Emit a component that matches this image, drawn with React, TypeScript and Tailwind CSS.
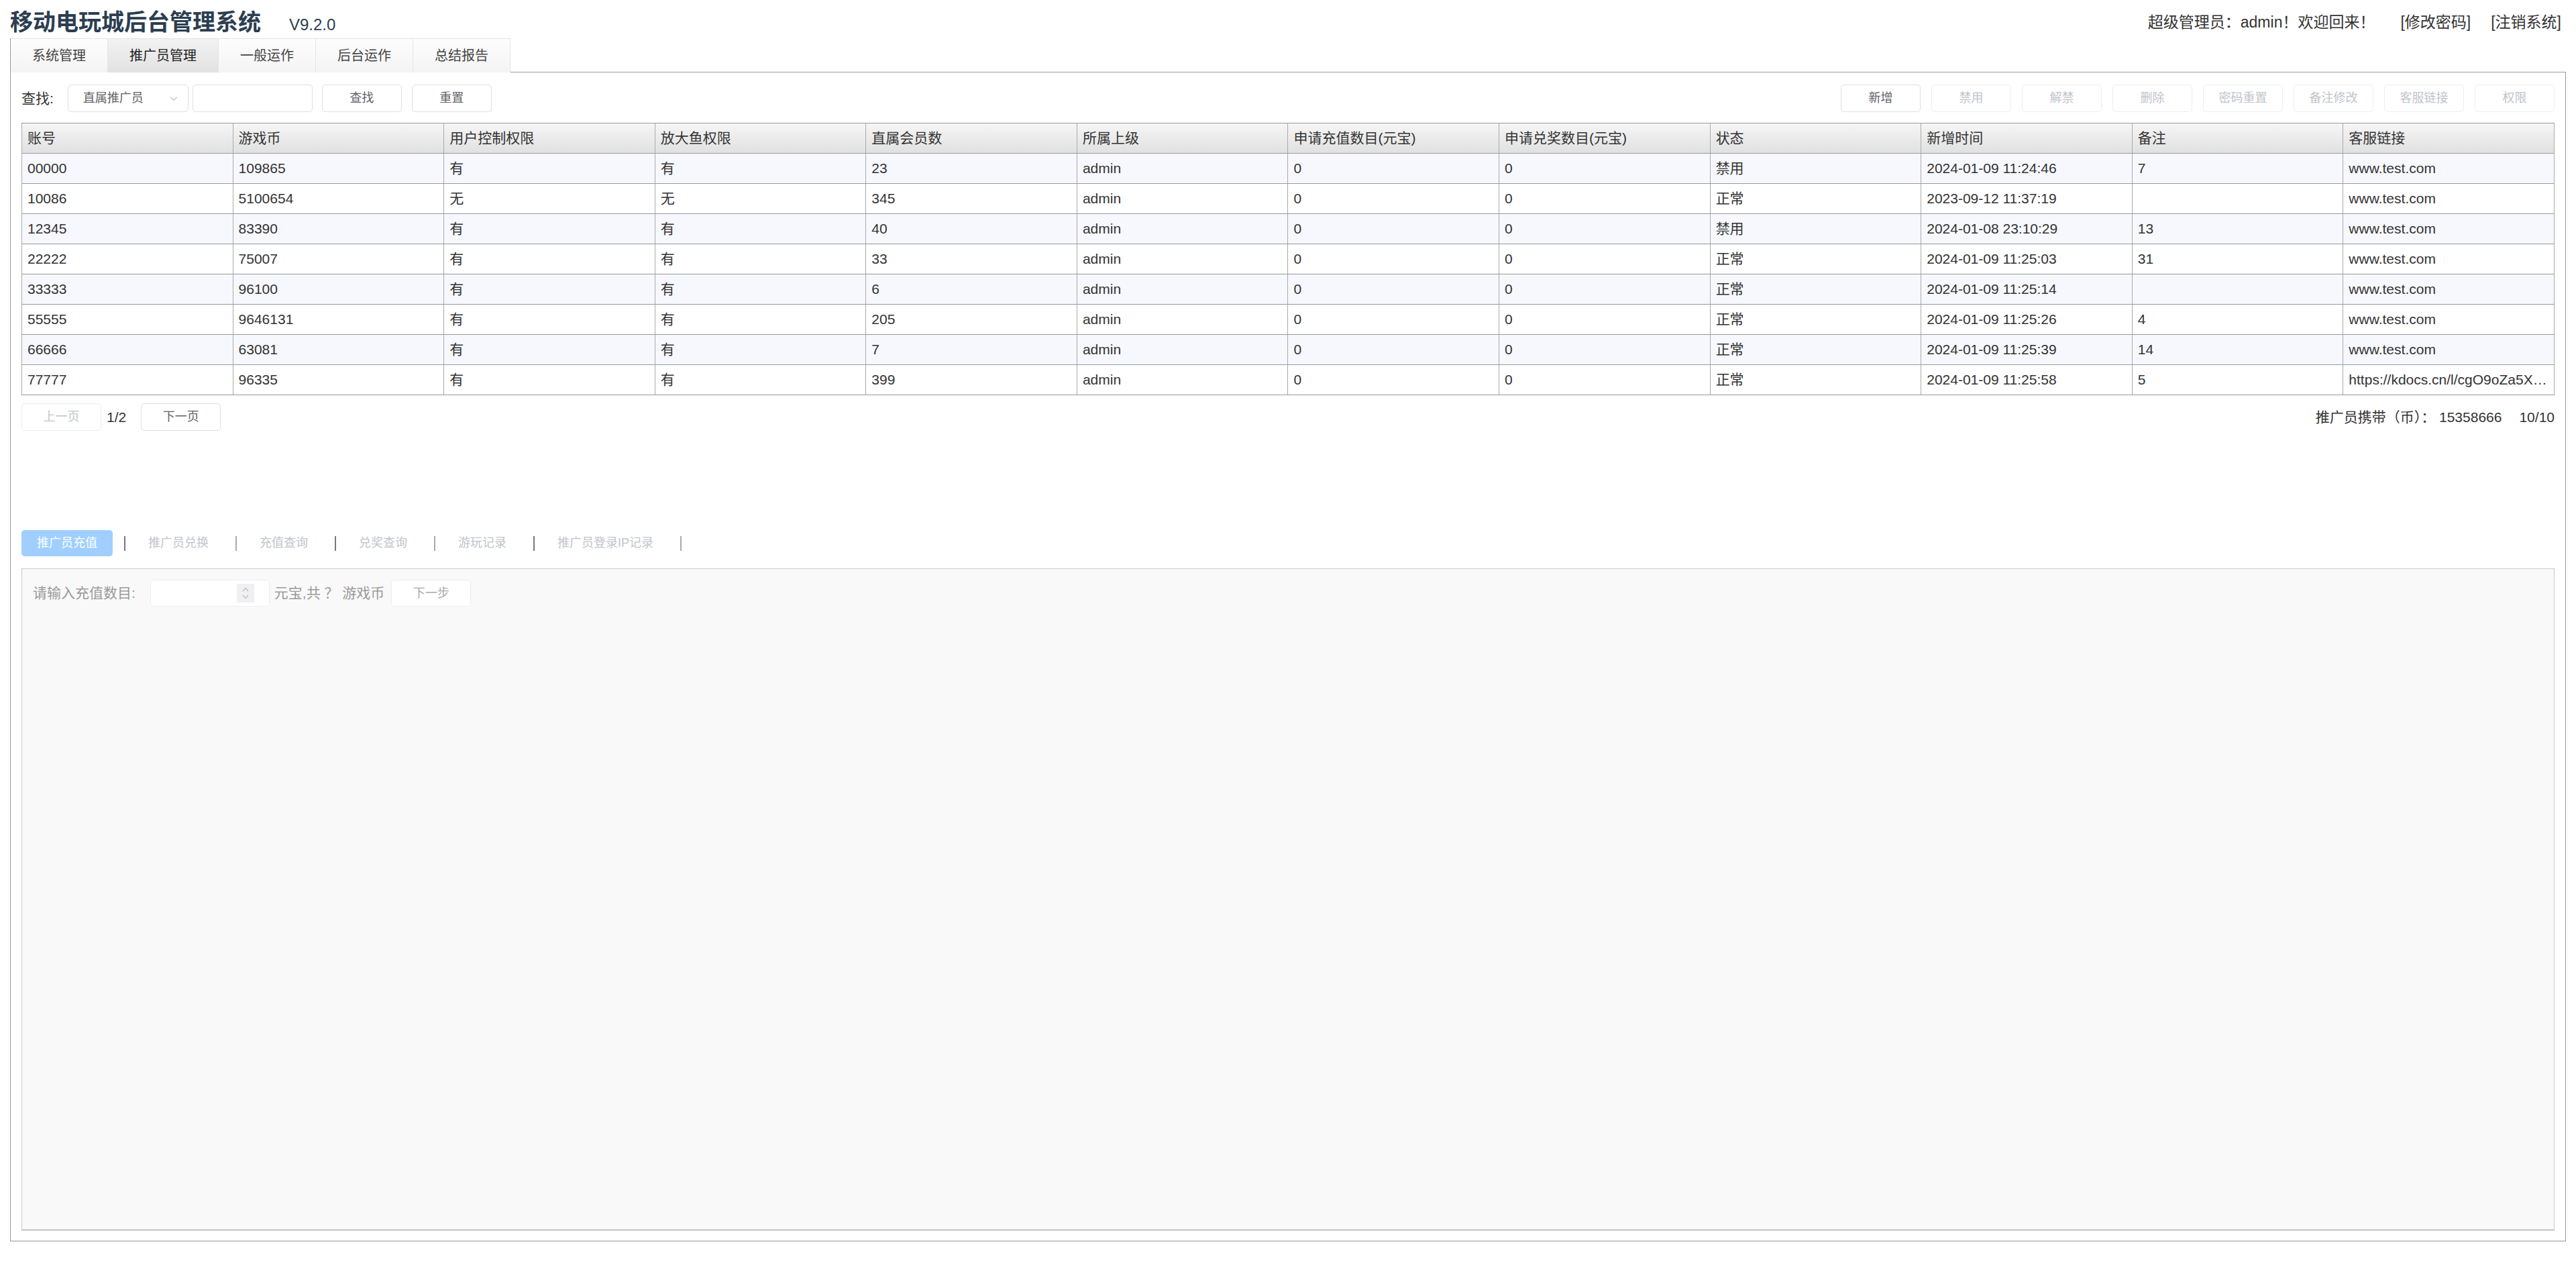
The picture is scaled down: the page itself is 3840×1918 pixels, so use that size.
import React from 'react';

const FONT = '"Liberation Sans", "Noto Sans CJK SC", sans-serif';

const topTabs = ['系统管理', '推广员管理', '一般运作', '后台运作', '总结报告'];

const columns = [
  '账号',
  '游戏币',
  '用户控制权限',
  '放大鱼权限',
  '直属会员数',
  '所属上级',
  '申请充值数目(元宝)',
  '申请兑奖数目(元宝)',
  '状态',
  '新增时间',
  '备注',
  '客服链接',
];

const rows: string[][] = [
  ['00000', '109865', '有', '有', '23', 'admin', '0', '0', '禁用', '2024-01-09 11:24:46', '7', 'www.test.com'],
  ['10086', '5100654', '无', '无', '345', 'admin', '0', '0', '正常', '2023-09-12 11:37:19', '', 'www.test.com'],
  ['12345', '83390', '有', '有', '40', 'admin', '0', '0', '禁用', '2024-01-08 23:10:29', '13', 'www.test.com'],
  ['22222', '75007', '有', '有', '33', 'admin', '0', '0', '正常', '2024-01-09 11:25:03', '31', 'www.test.com'],
  ['33333', '96100', '有', '有', '6', 'admin', '0', '0', '正常', '2024-01-09 11:25:14', '', 'www.test.com'],
  ['55555', '9646131', '有', '有', '205', 'admin', '0', '0', '正常', '2024-01-09 11:25:26', '4', 'www.test.com'],
  ['66666', '63081', '有', '有', '7', 'admin', '0', '0', '正常', '2024-01-09 11:25:39', '14', 'www.test.com'],
  ['77777', '96335', '有', '有', '399', 'admin', '0', '0', '正常', '2024-01-09 11:25:58', '5', 'https://kdocs.cn/l/cgO9oZa5Xk2z'],
];

const actions = ['新增', '禁用', '解禁', '删除', '密码重置', '备注修改', '客服链接', '权限'];

const subTabs = ['推广员充值', '推广员兑换', '充值查询', '兑奖查询', '游玩记录', '推广员登录IP记录'];

const Btn: React.FC<{ label: string; disabled?: boolean; className?: string }> = ({ label, disabled, className }) => (
  <button
    className={`h-[41px] w-[119px] rounded-[5px] border bg-white text-[18px] ${
      disabled ? 'border-[#ebeef5] text-[#c0c4cc]' : 'border-[#dcdfe6] text-[#606266]'
    } ${className ?? ''}`}
  >
    {label}
  </button>
);

export default function App() {
  return (
    <div className="min-h-screen bg-white px-[15px] text-[#333]" style={{ fontFamily: FONT }}>
      {/* Header */}
      <div className="flex h-[57px] items-center justify-between pt-[10px]">
        <div className="flex items-baseline">
          <span className="text-[34px] font-bold text-[#2c3e50]">移动电玩城后台管理系统</span>
          <span className="ml-[42px] text-[24px] text-[#2c3e50]">V9.2.0</span>
        </div>
        <div className="flex items-center pr-[7px] text-[23px] text-[#333]">
          <span>超级管理员：admin！欢迎回来！</span>
          <span className="ml-[38px]">[修改密码]</span>
          <span className="ml-[30px]">[注销系统]</span>
        </div>
      </div>

      {/* Top tabs */}
      <div className="flex h-[51px]">
        {topTabs.map((t, i) => (
          <div
            key={t}
            className={`flex h-full items-center justify-center border-t border-r border-[#e4e4e4] px-[32px] text-[20px] ${
              i === 0 ? 'border-l border-l-[#999]' : ''
            } ${
              i === 1
                ? 'bg-gradient-to-b from-[#f2f2f2] to-[#e2e2e2] text-[#222]'
                : 'bg-gradient-to-b from-[#fdfdfd] to-[#f4f4f4] text-[#444]'
            }`}
          >
            {t}
          </div>
        ))}
        <div className="flex-1 border-b border-[#999]" />
      </div>

      {/* Main panel */}
      <div className="flex h-[1742px] flex-col border-r border-b border-l border-[#999] px-[16px] pt-[18px] pb-[15px]">
        {/* Search / actions */}
        <div className="flex items-center justify-between">
          <div className="flex items-center">
            <span className="text-[21px] text-[#333]">查找:</span>
            <div className="ml-[21px] flex h-[41px] w-[180px] items-center justify-between rounded-[5px] border border-[#dcdfe6] pr-[14px] pl-[22px] text-[18px] text-[#606266]">
              <span>直属推广员</span>
              <svg width="14" height="14" viewBox="0 0 14 14" fill="none" stroke="#c0c4cc" strokeWidth="1.3">
                <path d="M2 4.5 L7 9.5 L12 4.5" />
              </svg>
            </div>
            <div className="ml-[6px] h-[41px] w-[179px] rounded-[5px] border border-[#dcdfe6] bg-white" />
            <Btn label="查找" className="ml-[14px]" />
            <Btn label="重置" className="ml-[15px]" />
          </div>
          <div className="flex gap-[16px]">
            {actions.map((a, i) => (
              <Btn key={a} label={a} disabled={i !== 0} />
            ))}
          </div>
        </div>

        {/* Table */}
        <table className="mt-[16px] w-full table-fixed border-collapse border border-[#999] text-[21px]">
          <thead>
            <tr className="h-[45px] bg-gradient-to-b from-[#f6f6f6] to-[#e0e0e0]">
              {columns.map((c) => (
                <th key={c} className="border border-[#999] border-x-[#aaa] px-[8px] text-left font-normal text-[#333]">
                  {c}
                </th>
              ))}
            </tr>
          </thead>
          <tbody>
            {rows.map((r, ri) => (
              <tr key={r[0]} className={`h-[45px] ${ri % 2 === 0 ? 'bg-[#f7f8fd]' : 'bg-white'}`}>
                {r.map((v, ci) => (
                  <td
                    key={ci}
                    className="truncate border border-[#999] border-x-[#aaa] px-[8px] text-[#333]"
                  >
                    {v}
                  </td>
                ))}
              </tr>
            ))}
          </tbody>
        </table>

        {/* Pagination */}
        <div className="mt-[12px] flex items-center justify-between">
          <div className="flex items-center">
            <Btn label="上一页" disabled />
            <span className="ml-[8px] text-[21px] text-[#333]">1/2</span>
            <Btn label="下一页" className="ml-[22px]" />
          </div>
          <div className="flex items-center text-[21px] text-[#333]">
            <span>推广员携带（币）： 15358666</span>
            <span className="ml-[26px]">10/10</span>
          </div>
        </div>

        {/* Sub tabs */}
        <div className="mt-[148px] flex items-center">
          {subTabs.map((t, i) => (
            <React.Fragment key={t}>
              <button
                className={`h-[39px] rounded-[5px] px-[23px] text-[18px] ${
                  i === 0 ? 'bg-[#a0cfff] text-white' : 'bg-transparent text-[#c0c4cc]'
                }`}
              >
                {t}
              </button>
              <span className={`ml-[17px] mr-[11px] h-[22px] w-[2px] ${i % 2 === 0 ? 'bg-[#777]' : 'bg-[#aaa]'}`} />
            </React.Fragment>
          ))}
        </div>

        {/* Recharge panel */}
        <div className="mt-[18px] flex-1 border border-[#ccc] border-b-2 border-b-[#c4c4c4] bg-[#f9f9f9] px-[16px] pt-[16px]">
          <div className="flex items-center text-[21px] text-[#999]">
            <span>请输入充值数目:</span>
            <div className="ml-[22px] flex h-[40px] w-[178px] items-center justify-end rounded-[5px] border border-[#ebeef5] bg-white pr-[22px]">
              <div className="flex h-[28px] w-[26px] flex-col items-center justify-center bg-[#f0f0f2]">
                <svg width="12" height="22" viewBox="0 0 12 22" fill="none" stroke="#b8bcc4" strokeWidth="1.2">
                  <path d="M2 8 L6 3.5 L10 8" />
                  <path d="M2 14 L6 18.5 L10 14" />
                </svg>
              </div>
            </div>
            <span className="ml-[7px] whitespace-pre">元宝,共 ？ 游戏币</span>
            <button className="ml-[10px] h-[40px] w-[119px] rounded-[5px] border border-[#ebeef5] bg-white text-[18px] text-[#aaa]">
              下一步
            </button>
          </div>
        </div>
      </div>
    </div>
  );
}
